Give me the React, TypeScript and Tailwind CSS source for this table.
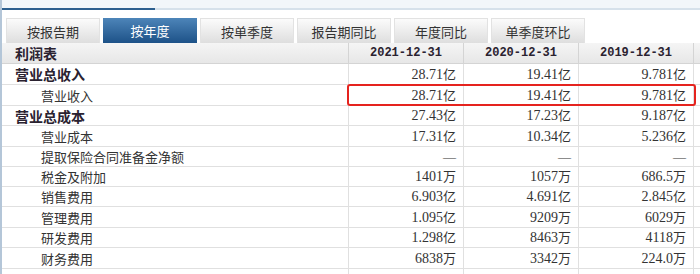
import React from 'react';

const tabs = ['按报告期', '按年度', '按单季度', '报告期同比', '年度同比', '单季度环比'];

type Row = { label: string; bold?: boolean; values: string[]; h: string };

// 每行高度跟截图里的分隔线对齐 (20/21px 交替)
const rows: Row[] = [
  { label: '营业总收入', bold: true, values: ['28.71亿', '19.41亿', '9.781亿'], h: 'h-[21px]' },
  { label: '营业收入', values: ['28.71亿', '19.41亿', '9.781亿'], h: 'h-[21px]' },
  { label: '营业总成本', bold: true, values: ['27.43亿', '17.23亿', '9.187亿'], h: 'h-[20px]' },
  { label: '营业成本', values: ['17.31亿', '10.34亿', '5.236亿'], h: 'h-[21px]' },
  { label: '提取保险合同准备金净额', values: ['—', '—', '—'], h: 'h-[20px]' },
  { label: '税金及附加', values: ['1401万', '1057万', '686.5万'], h: 'h-[20px]' },
  { label: '销售费用', values: ['6.903亿', '4.691亿', '2.845亿'], h: 'h-[20px]' },
  { label: '管理费用', values: ['1.095亿', '9209万', '6029万'], h: 'h-[21px]' },
  { label: '研发费用', values: ['1.298亿', '8463万', '4118万'], h: 'h-[20px]' },
  { label: '财务费用', values: ['6838万', '3342万', '224.0万'], h: 'h-[21px]' },
  { label: '其中：利息费用', values: ['1875万', '1093万', '256.7万'], h: 'h-[21px]' },
];

const Value = ({ text }: { text: string }) => {
  if (text === '—') {
    return <span className="font-['Liberation_Serif','Noto_Sans_CJK_SC',serif] text-[13px]">—</span>;
  }
  const num = text.slice(0, -1);
  const unit = text.slice(-1);
  return (
    <span className="flex items-baseline">
      <span className="font-['Liberation_Serif',serif] text-[14px]">{num}</span>
      <span className="font-['Noto_Sans_CJK_SC',sans-serif] text-[13px]">{unit}</span>
    </span>
  );
};

export default function App() {
  return (
    <div className="relative h-[274px] w-[700px] overflow-hidden border-l-2 border-[#b4c6d8] bg-white font-['Noto_Sans_CJK_SC',sans-serif] text-[#333]">
      {/* 顶部条 */}
      <div className="h-[8px] bg-[#f2f6fa]" />
      <div className="flex h-[2px]">
        <div className="w-[153px] bg-[#2d5f8f]" />
        <div className="flex-1 bg-[#d6e1eb]" />
      </div>

      {/* 标签页 */}
      <div className="mt-[8px] flex h-[25px] gap-[3px] pl-[4px]">
        {tabs.map((t, i) => (
          <div
            key={t}
            className={
              i === 1
                ? 'flex w-[94px] items-center justify-center bg-gradient-to-b from-[#4d85b9] to-[#1d5288] text-[13px] leading-none text-white'
                : 'flex w-[94px] items-center justify-center border border-b-0 border-[#e2e2e2] bg-gradient-to-b from-[#fbfbfb] to-[#dedede] text-[13px] leading-none text-[#333]'
            }
          >
            {t}
          </div>
        ))}
      </div>

      {/* 表格 */}
      <div className="grid grid-cols-[347px_115px_115px_115px_1fr]">
        <div className="flex h-[21px] items-center border-r border-b border-[#d4d4d4] bg-gradient-to-b from-[#f5f5f5] to-[#e7e7e7] pl-[13px] text-[14px] font-bold leading-none text-[#2a2230]">
          利润表
        </div>
        {['2021-12-31', '2020-12-31', '2019-12-31'].map((d) => (
          <div
            key={d}
            className="flex h-[21px] items-center justify-center border-r border-b border-[#d4d4d4] bg-gradient-to-b from-[#f5f5f5] to-[#e7e7e7] font-['Liberation_Mono',monospace] text-[12px] font-bold leading-none text-[#2a2230]"
          >
            {d}
          </div>
        ))}
        <div className="h-[21px] border-b border-[#d4d4d4] bg-gradient-to-b from-[#f5f5f5] to-[#e7e7e7]" />

        {rows.map((r) => (
          <React.Fragment key={r.label}>
            <div
              className={
                r.bold
                  ? `flex ${r.h} items-center border-r border-b border-[#e0e0e0] pl-[13px] text-[14px] font-bold leading-none text-[#2a2230]`
                  : `flex ${r.h} items-center border-r border-b border-[#e0e0e0] pl-[39px] text-[13px] leading-none text-[#333]`
              }
            >
              {r.label}
            </div>
            {r.values.map((v, i) => (
              <div
                key={i}
                className={`flex ${r.h} items-center justify-end border-r border-b border-[#e0e0e0] pr-[7px] leading-none text-[#333]`}
              >
                <Value text={v} />
              </div>
            ))}
            <div className={`${r.h} border-b border-[#e0e0e0]`} />
          </React.Fragment>
        ))}
      </div>

      {/* 红框标注 */}
      <div className="absolute left-[345px] top-[84px] h-[22px] w-[349px] rounded-[3px] border-2 border-[#e5231e]" />
    </div>
  );
}
